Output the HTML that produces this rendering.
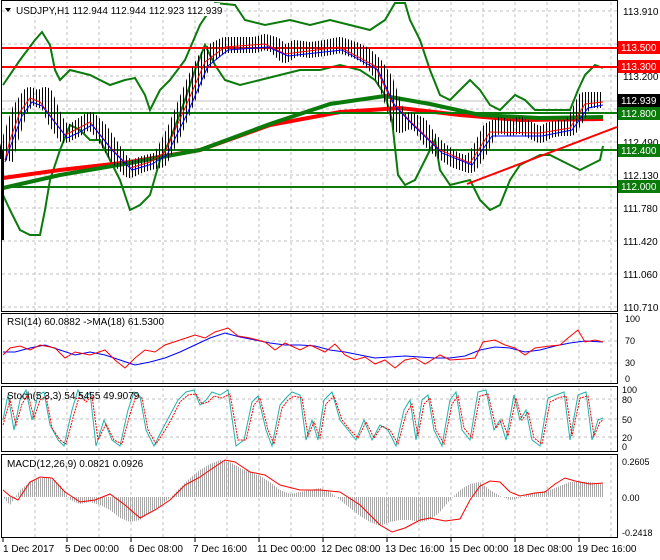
<!DOCTYPE html>
<html><head><meta charset="utf-8"><style>
html,body{margin:0;padding:0;background:#fff;}
svg{display:block;font-family:"Liberation Sans",sans-serif;}
</style></head><body>
<svg width="660" height="560" viewBox="0 0 660 560" xmlns="http://www.w3.org/2000/svg">
<defs>
<pattern id="vb" width="3" height="4" patternUnits="userSpaceOnUse"><rect x="0" y="0" width="1" height="4" fill="#000"/></pattern>
<pattern id="hg" width="2" height="4" patternUnits="userSpaceOnUse"><rect x="0" y="0" width="1" height="4" fill="#a8a8a8"/></pattern>
</defs>
<rect width="660" height="560" fill="#fff"/>
<g stroke="#c0c0c0" stroke-dasharray="3,3" stroke-width="1" fill="none">
<path d="M35 2V311M67 2V311M99 2V311M131 2V311M163 2V311M195 2V311M227 2V311M259 2V311M291 2V311M323 2V311M355 2V311M387 2V311M419 2V311M451 2V311M483 2V311M515 2V311M547 2V311M579 2V311M611 2V311"/>
<path d="M35 314V383M67 314V383M99 314V383M131 314V383M163 314V383M195 314V383M227 314V383M259 314V383M291 314V383M323 314V383M355 314V383M387 314V383M419 314V383M451 314V383M483 314V383M515 314V383M547 314V383M579 314V383M611 314V383"/>
<path d="M35 388V451M67 388V451M99 388V451M131 388V451M163 388V451M195 388V451M227 388V451M259 388V451M291 388V451M323 388V451M355 388V451M387 388V451M419 388V451M451 388V451M483 388V451M515 388V451M547 388V451M579 388V451M611 388V451"/>
<path d="M35 456V537M67 456V537M99 456V537M131 456V537M163 456V537M195 456V537M227 456V537M259 456V537M291 456V537M323 456V537M355 456V537M387 456V537M419 456V537M451 456V537M483 456V537M515 456V537M547 456V537M579 456V537M611 456V537"/>
<path d="M2 11H617M2 44H617M2 76H617M2 109H617M2 142H617M2 175H617M2 208H617M2 241H617M2 274H617M2 307H617"/>
<path d="M2 341H617M2 363H617M2 399H617M2 419H617M2 437H617"/>
</g>
<line x1="2" y1="101" x2="617" y2="101" stroke="#c0c0c0"/>
<g fill="none" stroke="#000" stroke-width="1">
<rect x="1.5" y="0.5" width="616" height="311"/>
<rect x="1.5" y="313.5" width="616" height="70"/>
<rect x="1.5" y="386.5" width="616" height="65"/>
<rect x="1.5" y="454.5" width="616" height="83"/>
</g>
<!-- bollinger bands -->
<g fill="none" stroke="#0a7a0a" stroke-width="2">
<path d="M3 85 L20 60 L35 40 L42 32 L50 45 L55 70 L60 80 L70 70 L90 75 L110 85 L125 80 L135 78 L145 95 L150 110 L160 90 L170 80 L185 60 L200 25 L210 10 L215 3 L235 5 L245 20 L265 25 L290 20 L310 25 L330 20 L350 25 L370 30 L385 20 L395 3 L405 3 L410 20 L420 40 L430 70 L440 95 L450 100 L460 90 L470 80 L480 90 L490 105 L500 110 L515 95 L525 100 L535 110 L550 110 L560 110 L570 110 L578 90 L585 75 L595 65 L603 68"/>
<path d="M3 195 L10 210 L20 230 L30 235 L40 235 L45 210 L50 180 L60 150 L70 125 L80 130 L90 140 L100 140 L110 160 L120 180 L130 210 L140 205 L150 195 L160 160 L170 140 L185 100 L195 70 L205 45 L215 65 L225 80 L240 85 L260 80 L280 75 L300 70 L320 70 L340 65 L360 70 L375 80 L385 95 L392 120 L398 175 L405 185 L415 180 L425 160 L435 140 L440 170 L450 185 L470 180 L480 200 L490 210 L500 205 L510 180 L520 165 L530 160 L540 155 L550 155 L560 160 L570 165 L580 170 L590 165 L600 160 L603 146"/>
</g>
<path d="M3 178 L60 170 L130 162 L200 150 L270 125 L340 112 L400 108 L460 115 L520 120 L603 119" fill="none" stroke="#f00" stroke-width="4"/>
<path d="M3 188 L60 175 L130 163 L200 150 L270 124 L330 104 L385 96 L430 104 L480 115 L540 118 L603 117" fill="none" stroke="#0a7a0a" stroke-width="4"/>
<g stroke-width="2">
<line x1="2" y1="48" x2="617" y2="48" stroke="#f00"/>
<line x1="2" y1="67" x2="617" y2="67" stroke="#f00"/>
<line x1="2" y1="113" x2="617" y2="113" stroke="#0a7a0a"/>
<line x1="2" y1="150" x2="617" y2="150" stroke="#0a7a0a"/>
<line x1="2" y1="187" x2="617" y2="187" stroke="#0a7a0a"/>
</g>
<line x1="467" y1="184" x2="617" y2="127" stroke="#f00" stroke-width="2"/>
<!-- price bars -->
<path d="M5 160 L10 140 L20 110 L30 95 L40 100 L45 95 L55 120 L65 135 L75 130 L90 120 L100 130 L110 145 L120 160 L130 170 L140 165 L150 162 L160 160 L165 150 L175 130 L185 105 L195 80 L205 60 L215 50 L225 45 L240 45 L255 45 L265 42 L275 45 L285 55 L295 48 L310 50 L325 48 L340 45 L355 50 L365 55 L375 65 L385 80 L392 100 L400 125 L410 120 L420 125 L430 140 L440 150 L455 160 L470 165 L480 150 L490 130 L500 125 L510 128 L520 125 L530 130 L540 135 L550 130 L560 128 L570 128 L578 115 L585 100 L595 100 L603 100" fill="none" stroke="url(#vb)" stroke-width="16" stroke-linejoin="round"/>
<path d="M5 160 L10 140 L20 112 L30 98 L40 102 L55 122 L65 135 L75 130 L90 122 L110 147 L130 168 L150 162 L165 152 L185 108 L205 62 L225 47 L265 44 L285 54 L340 47 L375 66 L392 102 L410 121 L440 150 L470 163 L490 132 L540 133 L570 128 L585 104 L603 102" fill="none" stroke="#f00" stroke-width="1"/>
<path d="M5 162 L12 142 L22 116 L32 102 L42 106 L57 125 L67 138 L78 133 L92 125 L112 150 L132 170 L152 164 L167 155 L188 112 L208 66 L228 50 L268 47 L288 56 L342 50 L378 70 L395 106 L412 124 L442 153 L472 165 L492 136 L542 136 L572 130 L588 108 L603 105" fill="none" stroke="#00f" stroke-width="1"/>
<line x1="3" y1="150" x2="3" y2="240" stroke="#000" stroke-width="2"/>
<g font-size="10" fill="#000">
<text x="623" y="15">113.910</text><text x="623" y="80">113.200</text><text x="623" y="146">112.490</text><text x="623" y="179">112.130</text><text x="623" y="212">111.780</text><text x="623" y="245">111.420</text><text x="623" y="278">111.060</text><text x="623" y="311">110.710</text>
</g>
<g font-size="10">
<rect x="618" y="41" width="42" height="13" fill="#f00"/><text x="621" y="51" fill="#fff">113.500</text>
<rect x="618" y="60" width="42" height="13" fill="#f00"/><text x="621" y="70" fill="#fff">113.300</text>
<rect x="618" y="94" width="42" height="13" fill="#000"/><text x="621" y="104" fill="#fff">112.939</text>
<rect x="618" y="107" width="42" height="13" fill="#0a7a0a"/><text x="621" y="117" fill="#fff">112.800</text>
<rect x="618" y="144" width="42" height="13" fill="#0a7a0a"/><text x="621" y="154" fill="#fff">112.400</text>
<rect x="618" y="180" width="42" height="13" fill="#0a7a0a"/><text x="621" y="190" fill="#fff">112.000</text>
</g>
<path d="M5 8 L11 8 L8 12Z" fill="#000"/>
<rect x="14" y="3" width="206" height="13" fill="#fff"/>
<text x="16" y="14" font-size="10">USDJPY,H1  112.944 112.944 112.923 112.939</text>
<!-- RSI -->
<path d="M3 352 L15 352 L30 348 L45 345 L60 350 L75 355 L90 352 L105 355 L120 360 L135 365 L150 362 L165 358 L180 352 L195 345 L210 338 L225 333 L240 337 L255 340 L270 343 L285 345 L300 345 L315 346 L330 350 L345 352 L360 355 L375 358 L390 357 L405 356 L420 357 L435 358 L450 358 L465 356 L480 350 L495 347 L510 348 L525 352 L540 350 L555 346 L570 343 L585 341 L603 342" fill="none" stroke="#00f" stroke-width="1"/>
<path d="M3 355 L10 348 L20 346 L30 350 L40 345 L55 348 L65 358 L75 352 L90 355 L105 350 L115 360 L125 368 L135 358 L145 350 L155 352 L165 345 L180 340 L195 335 L205 338 L215 332 L228 328 L238 336 L250 338 L265 342 L275 350 L285 343 L300 350 L310 345 L325 352 L335 344 L345 355 L355 360 L365 357 L375 364 L385 360 L395 368 L405 360 L415 358 L425 364 L440 355 L450 360 L465 359 L475 358 L483 342 L495 340 L505 345 L515 348 L525 355 L535 348 L550 346 L560 345 L568 338 L578 330 L585 342 L595 340 L603 342" fill="none" stroke="#f00" stroke-width="1"/>
<text x="7" y="325" font-size="10">RSI(14) 60.0882  -&gt;MA(18) 61.5300</text>
<g font-size="9"><text x="625" y="322">100</text><text x="625" y="344">70</text><text x="625" y="366">30</text><text x="625" y="382">0</text></g>
<!-- Stoch -->
<path d="M3 420 L8 395 L14 430 L20 400 L26 390 L32 420 L38 395 L44 392 L50 425 L58 440 L64 446 L72 410 L78 390 L84 400 L90 392 L96 446 L104 420 L112 440 L120 446 L128 410 L134 392 L140 396 L146 430 L154 446 L162 430 L170 415 L178 400 L186 392 L194 390 L200 405 L206 400 L212 392 L220 395 L228 390 L236 446 L244 440 L252 402 L258 396 L266 430 L272 446 L280 405 L286 398 L292 392 L300 395 L306 440 L312 420 L318 440 L324 400 L332 392 L340 420 L348 430 L356 440 L364 420 L372 440 L380 425 L388 430 L396 446 L404 410 L410 400 L416 440 L422 400 L428 395 L434 430 L442 446 L450 400 L456 392 L462 430 L470 440 L478 392 L486 390 L494 430 L500 420 L506 440 L514 395 L520 420 L526 410 L532 440 L540 446 L548 398 L556 395 L564 392 L570 440 L578 395 L586 392 L592 440 L598 420 L603 418" fill="none" stroke="#20b2aa" stroke-width="1"/>
<path d="M3 425 L10 400 L16 425 L22 404 L28 394 L34 418 L40 400 L46 396 L52 428 L60 440 L66 444 L74 414 L80 394 L86 402 L92 396 L98 440 L106 424 L114 440 L122 444 L130 414 L136 396 L142 398 L148 430 L156 444 L164 432 L172 418 L180 402 L188 395 L196 394 L202 404 L208 402 L214 396 L222 398 L230 394 L238 440 L246 440 L254 405 L260 398 L268 430 L274 444 L282 408 L288 400 L294 396 L302 398 L308 436 L314 422 L320 438 L326 404 L334 396 L342 420 L350 430 L358 438 L366 422 L374 438 L382 426 L390 430 L398 444 L406 414 L412 404 L418 436 L424 404 L430 398 L436 430 L444 444 L452 404 L458 396 L464 428 L472 438 L480 396 L488 394 L496 428 L502 420 L508 436 L516 398 L522 420 L528 412 L534 438 L542 444 L550 402 L558 398 L566 396 L572 436 L580 398 L588 396 L594 436 L600 422 L603 420" fill="none" stroke="#f00" stroke-width="1" stroke-dasharray="2,1"/>
<text x="7" y="399" font-size="10">Stoch(5,3,3) 54.5455 49.9079</text>
<g font-size="9"><text x="622" y="393">100</text><text x="622" y="403">80</text><text x="622" y="423">50</text><text x="622" y="441">20</text><text x="622" y="450">0</text></g>
<!-- MACD histogram -->
<path d="M3 497 L10 505 L20 490 L30 482 L40 478 L50 478 L60 485 L70 500 L80 504 L90 502 L100 505 L110 510 L120 518 L130 522 L140 520 L150 512 L160 506 L170 498 L180 488 L190 478 L200 470 L210 464 L220 460 L230 462 L240 468 L250 472 L260 476 L270 482 L280 490 L290 494 L300 492 L310 490 L320 488 L330 492 L340 500 L350 508 L360 516 L370 522 L380 526 L390 522 L400 520 L410 520 L420 522 L430 520 L440 512 L450 500 L460 490 L470 484 L480 482 L490 490 L500 496 L510 500 L520 498 L530 494 L540 492 L550 490 L560 486 L570 482 L580 482 L590 482 L603 484 L603 497 Z" fill="url(#hg)"/>
<path d="M3 490 L10 496 L18 500 L30 482 L40 477 L52 478 L65 492 L80 502 L95 500 L110 494 L125 505 L140 518 L155 510 L170 500 L185 485 L200 477 L210 470 L225 460 L235 462 L250 472 L265 475 L280 485 L300 490 L320 490 L340 492 L360 505 L380 525 L392 532 L405 528 L420 520 L430 518 L445 521 L460 519 L470 500 L480 486 L490 481 L500 482 L510 492 L520 496 L535 493 L545 492 L555 484 L565 478 L575 481 L590 484 L603 483" fill="none" stroke="#f00" stroke-width="1"/>
<text x="7" y="467" font-size="10">MACD(12,26,9) 0.0821 0.0926</text>
<g font-size="9"><text x="622" y="465">0.2605</text><text x="622" y="501">0.00</text><text x="622" y="536">-0.2418</text></g>
<g stroke="#000"><path d="M3 538V542M67 538V542M131 538V542M195 538V542M259 538V542M323 538V542M387 538V542M451 538V542M515 538V542M579 538V542"/></g>
<g font-size="10" fill="#000">
<text x="3" y="552">1 Dec 2017</text><text x="65" y="552">5 Dec 00:00</text><text x="129" y="552">6 Dec 08:00</text><text x="193" y="552">7 Dec 16:00</text><text x="257" y="552">11 Dec 00:00</text><text x="321" y="552">12 Dec 08:00</text><text x="385" y="552">13 Dec 16:00</text><text x="449" y="552">15 Dec 00:00</text><text x="513" y="552">18 Dec 08:00</text><text x="577" y="552">19 Dec 16:00</text>
</g>
</svg>
</body></html>
